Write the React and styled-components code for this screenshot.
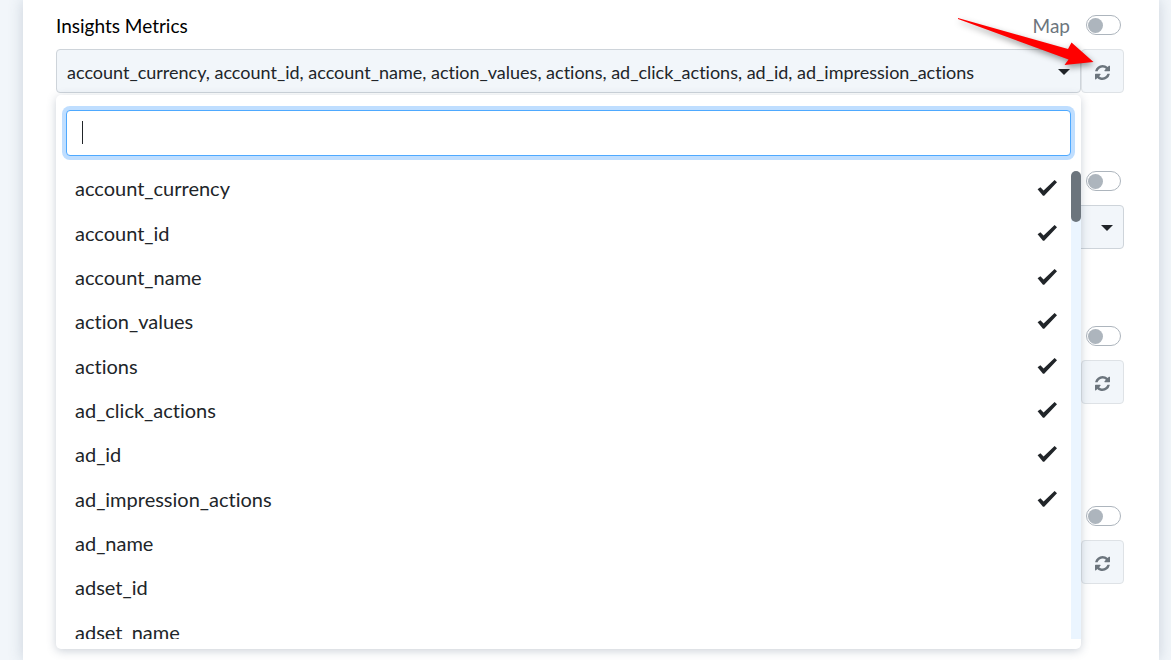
import { useState } from 'react'
import styled, { createGlobalStyle } from 'styled-components'

const colors = {
  page: '#f2f6fa',
  field: '#f2f6fa',
  border: '#ced4da',
  text: '#212529',
  muted: '#6c757d',
  toggle: '#adb5bd',
  focus: '#4ea9ff',
  ring: '#bfdeff',
  track: '#ebf5ff',
}

const GlobalStyle = createGlobalStyle`
  * {
    box-sizing: border-box;
  }
  body {
    margin: 0;
    background: ${colors.page};
    color: ${colors.text};
    font-family: Lato, 'Liberation Sans', sans-serif;
    font-size: 18px;
    line-height: 24px;
    font-variant-ligatures: none;
  }
  button,
  input {
    font: inherit;
    font-variant-ligatures: none;
    color: inherit;
  }
`

const Card = styled.main`
  min-height: 100vh;
  margin: 0 12px 0 23px;
  padding: 15px 35px 0 33px;
  background: #fff;
  box-shadow: 0 0 14px rgba(60, 80, 110, 0.22);
`
const Field = styled.section`
  position: relative;
  margin-bottom: ${(props) => props.$gap || 0}px;
`
const FieldHeader = styled.div`
  display: flex;
  align-items: center;
  height: 20px;
  margin-bottom: 14px;
  padding-right: 3px;
`
const Title = styled.h2`
  flex: 1;
  margin: 0;
  padding-top: 2px;
  font-size: 19px;
  font-weight: 400;
  color: #000;
`
const MapLabel = styled.label`
  display: flex;
  align-items: center;
  gap: 16px;
  margin-left: auto;
  font-size: 19px;
  color: ${colors.muted};
`
const MapText = styled.span`
  padding-top: 2px;
`
const Toggle = styled.input`
  appearance: none;
  display: flex;
  align-items: center;
  width: 35px;
  height: 20px;
  margin: 0;
  padding: 0 1px;
  border: 1px solid ${colors.toggle};
  border-radius: 10px;
  background: #fff;
  &::before {
    content: '';
    width: 15px;
    height: 15px;
    border-radius: 50%;
    background: ${colors.toggle};
  }
  &:checked {
    justify-content: flex-end;
  }
`
const Controls = styled.div`
  display: flex;
`
const Picker = styled.button`
  display: flex;
  flex: 1;
  align-items: center;
  min-width: 0;
  height: 44px;
  padding: 2px 10px 0;
  border: 1px solid ${colors.border};
  border-radius: 4px;
  background: ${colors.field};
  text-align: left;
`
const Value = styled.span`
  flex: 1;
  overflow: hidden;
  white-space: nowrap;
`
const CaretDown = styled.span`
  border: 6px solid transparent;
  border-top-color: ${colors.text};
  border-bottom: 0;
`
const RefreshButton = styled.button`
  display: grid;
  place-items: center;
  width: 43px;
  height: 44px;
  padding: 2px 0 0;
  border: 1px solid #dee2e6;
  border-radius: 4px;
  background: ${colors.field};
  color: ${colors.muted};
`
const Menu = styled.div`
  position: absolute;
  z-index: 1;
  top: 80px;
  left: 0;
  right: 43px;
  padding: 15px 0 10px;
  border-radius: 5px;
  background: #fff;
  box-shadow: 0 2px 10px rgba(50, 70, 100, 0.25);
`
const SearchBox = styled.div`
  position: relative;
  margin: 0 10px 10px;
`
const Search = styled.input`
  display: block;
  width: 100%;
  height: 46px;
  padding: 0 16px;
  border: 1px solid ${colors.focus};
  border-radius: 4px;
  outline: 0;
  background: #fff;
  box-shadow: 0 0 0 4px ${colors.ring};
`
const TextCursor = styled.span`
  position: absolute;
  top: 11px;
  left: 16px;
  width: 1px;
  height: 23px;
  background: ${colors.text};
`
const Scroller = styled.div`
  display: flex;
  height: 473px;
  overflow: hidden;
`
const Options = styled.ul`
  display: grid;
  flex: 1;
  grid-auto-rows: 1fr;
  height: 488px;
  margin: 0;
  padding: 0;
  list-style: none;
`
const Option = styled.button`
  display: flex;
  align-items: center;
  justify-content: space-between;
  width: 100%;
  height: 100%;
  padding: 0 14px 0 19px;
  border: 0;
  background: none;
  font-size: 20px;
  text-align: left;
`
const Track = styled.div`
  width: 10px;
  margin-top: 5px;
  background: linear-gradient(#fff 4px, ${colors.track} 4px);
`
const Thumb = styled.div`
  height: 51px;
  border-radius: 5px;
  background: ${colors.muted};
`
const Pointer = styled.svg`
  position: absolute;
  z-index: 2;
  top: -5px;
  right: 23px;
  overflow: visible;
  pointer-events: none;
  filter: drop-shadow(1px 3px 3px rgba(0, 0, 0, 0.4));
`

const metrics = [
  'account_currency',
  'account_id',
  'account_name',
  'action_values',
  'actions',
  'ad_click_actions',
  'ad_id',
  'ad_impression_actions',
  'ad_name',
  'adset_id',
  'adset_name',
]

function RefreshIcon() {
  return (
    <svg width="15" height="15" viewBox="0 0 1536 1536" fill="currentColor" aria-hidden="true">
      <path d="M1511 928q0 5-1 7-64 268-268 434.500t-478 166.500q-146 0-282.500-55t-243.500-157l-129 129q-19 19-45 19t-45-19-19-45v-448q0-26 19-45t45-19h448q26 0 45 19t19 45-19 45l-137 137q71 66 161 102t187 36q134 0 250-65t186-179q11-17 53-117 8-23 30-23h192q13 0 22.500 9.500t9.500 22.500zM1536 128v448q0 26-19 45t-45 19h-448q-26 0-45-19t-19-45 19-45l138-138q-148-137-349-137-134 0-250 65t-186 179q-11 17-53 117-8 23-30 23h-199q-13 0-22.500-9.500t-9.500-22.500v-7q65-268 270-434.500t480-166.500q146 0 284 55.500t245 156.500l130-129q19-19 45-19t45 19 19 45z" />
    </svg>
  )
}

function CheckIcon() {
  return (
    <svg width="20" height="16" viewBox="0 0 20 16" fill="currentColor" aria-hidden="true">
      <path d="M17.600 0L20 2.300L7.200 15.800H6L.6 9.300L3.400 7.200L6.600 10.500Z" />
    </svg>
  )
}

function MapToggle({ showText }) {
  return (
    <MapLabel>
      {showText && <MapText>Map</MapText>}
      <Toggle type="checkbox" role="switch" aria-label="Map" />
    </MapLabel>
  )
}

function PickerField({ name, refresh, gap }) {
  return (
    <Field $gap={gap}>
      <FieldHeader>
        <MapToggle />
      </FieldHeader>
      <Controls>
        <Picker type="button" aria-label={name}>
          <Value />
          <CaretDown />
        </Picker>
        {refresh && (
          <RefreshButton type="button" aria-label={`Refresh ${name}`}>
            <RefreshIcon />
          </RefreshButton>
        )}
      </Controls>
    </Field>
  )
}

function MetricsField() {
  const [selected, setSelected] = useState(metrics.slice(0, 8))
  const [query, setQuery] = useState('')

  const toggle = (name) =>
    setSelected(
      selected.includes(name) ? selected.filter((item) => item !== name) : [...selected, name]
    )

  return (
    <Field $gap={78}>
      <FieldHeader>
        <Title>Insights Metrics</Title>
        <MapToggle showText />
      </FieldHeader>
      <Controls>
        <Picker type="button" aria-haspopup="true" aria-expanded="true">
          <Value>{selected.join(', ')}</Value>
          <CaretDown />
        </Picker>
        <RefreshButton type="button" aria-label="Refresh metrics">
          <RefreshIcon />
        </RefreshButton>
      </Controls>
      <Menu>
        <SearchBox>
          <Search
            type="text"
            aria-label="Search metrics"
            value={query}
            onChange={(e) => setQuery(e.target.value)}
          />
          {!query && <TextCursor />}
        </SearchBox>
        <Scroller>
          <Options>
            {metrics
              .filter((name) => name.includes(query))
              .map((name) => (
                <li key={name}>
                  <Option
                    type="button"
                    aria-pressed={selected.includes(name)}
                    onClick={() => toggle(name)}
                  >
                    {name}
                    {selected.includes(name) && <CheckIcon />}
                  </Option>
                </li>
              ))}
          </Options>
          <Track>
            <Thumb />
          </Track>
        </Scroller>
      </Menu>
      <Pointer width="144" height="56" viewBox="957 10 144 56" aria-hidden="true">
        <path d="M958 18L1068 49L1071.500 42.500L1093.500 62L1064.500 65L1068.500 59.500L958 19Z" fill="#f00" />
      </Pointer>
    </Field>
  )
}

function App() {
  return (
    <>
      <GlobalStyle />
      <Card>
        <MetricsField />
        <PickerField name="Breakdowns" gap={77} />
        <PickerField name="Dimensions" refresh gap={102} />
        <PickerField name="Accounts" refresh />
      </Card>
    </>
  )
}

export default App
